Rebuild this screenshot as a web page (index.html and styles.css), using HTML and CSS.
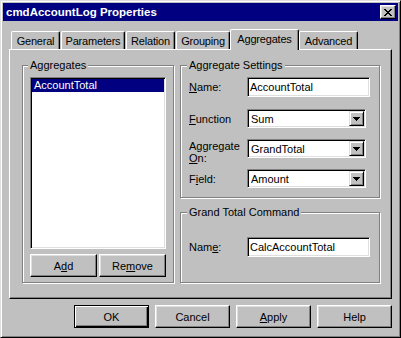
FILE: index.html
```html
<!DOCTYPE html>
<html lang="en">
<head>
    <meta charset="UTF-8">
    <title>cmdAccountLog Properties</title>
    <link rel="stylesheet" href="styles.css">
</head>
<body>
    <div class="window">
        <div class="titlebar">
            <span class="title">cmdAccountLog Properties</span>
            <span class="close">
                <svg width="8" height="7" viewBox="0 0 8 7" shape-rendering="crispEdges">
                    <path d="M0 0h2v1H0zM6 0h2v1H6zM1 1h2v1H1zM5 1h2v1H5zM2 2h4v1H2zM3 3h2v1H3zM2 4h4v1H2zM1 5h2v1H1zM5 5h2v1H5zM0 6h2v1H0zM6 6h2v1H6z" fill="#000"/>
                </svg>
            </span>
        </div>

        <div class="content">
            <div class="tabs">
                <div class="tab tab-general">General</div>
                <div class="tab tab-parameters">Parameters</div>
                <div class="tab tab-relation">Relation</div>
                <div class="tab tab-grouping">Grouping</div>
                <div class="tab tab-aggregates active">Aggregates</div>
                <div class="tab tab-advanced">Advanced</div>
            </div>

            <div class="panel">
                <div class="group group-list">
                    <span class="legend">Aggregates</span>
                    <div class="listbox">
                        <div class="item selected">AccountTotal</div>
                    </div>
                    <div class="list-buttons">
                        <button class="btn">A<u>d</u>d</button>
                        <button class="btn">Re<u>m</u>ove</button>
                    </div>
                </div>

                <div class="right-col">
                    <div class="group group-settings">
                        <span class="legend">Aggregate Settings</span>
                        <div class="row row-first">
                            <label><u>N</u>ame:</label>
                            <div class="textbox">AccountTotal</div>
                        </div>
                        <div class="row">
                            <label><u>F</u>unction</label>
                            <div class="combo"><span>Sum</span><span class="arrow"><svg width="7" height="4" viewBox="0 0 7 4" shape-rendering="crispEdges"><path d="M0 0h7v1H0zM1 1h5v1H1zM2 2h3v1H2zM3 3h1v1H3z" fill="#000"/></svg></span></div>
                        </div>
                        <div class="row row-tall">
                            <label>Aggregate<br><u>O</u>n:</label>
                            <div class="combo"><span>GrandTotal</span><span class="arrow"><svg width="7" height="4" viewBox="0 0 7 4" shape-rendering="crispEdges"><path d="M0 0h7v1H0zM1 1h5v1H1zM2 2h3v1H2zM3 3h1v1H3z" fill="#000"/></svg></span></div>
                        </div>
                        <div class="row">
                            <label>F<u>i</u>eld:</label>
                            <div class="combo"><span>Amount</span><span class="arrow"><svg width="7" height="4" viewBox="0 0 7 4" shape-rendering="crispEdges"><path d="M0 0h7v1H0zM1 1h5v1H1zM2 2h3v1H2zM3 3h1v1H3z" fill="#000"/></svg></span></div>
                        </div>
                    </div>

                    <div class="group group-command">
                        <span class="legend">Grand Total Command</span>
                        <div class="row row-first">
                            <label>Nam<u>e</u>:</label>
                            <div class="textbox">CalcAccountTotal</div>
                        </div>
                    </div>
                </div>
            </div>

            <div class="dialog-buttons">
                <button class="btn btn-wide default">OK</button>
                <button class="btn btn-wide">Cancel</button>
                <button class="btn btn-wide"><u>A</u>pply</button>
                <button class="btn btn-wide">Help</button>
            </div>
        </div>
    </div>
</body>
</html>
```

FILE: styles.css
```css
* { box-sizing: border-box; }
body { margin: 0; font-family: "Liberation Sans", Arial, sans-serif; font-size: 11px; color: #000; background: #c0c0c0; }
u { text-decoration: underline; text-underline-offset: 1px; }

.window { width: 401px; height: 338px; background: #c0c0c0; border: 1px solid; border-color: #dfdfdf #000 #000 #dfdfdf; box-shadow: inset 1px 1px #fff, inset -1px -1px #808080; padding: 2px; }
.titlebar { height: 18px; background: #000080; color: #fff; display: flex; align-items: center; justify-content: space-between; padding: 0 2px 0 3px; }
.title { font-weight: bold; font-size: 11.5px; }
.close { width: 16px; height: 14px; background: #c0c0c0; border: 1px solid; border-color: #fff #000 #000 #fff; box-shadow: inset -1px -1px #808080, inset 1px 1px #dfdfdf; display: flex; align-items: center; justify-content: center; }
.close svg { display: block; }

.content { padding: 8px 6px 0 6px; }

.tabs { display: flex; align-items: flex-end; height: 20px; padding-left: 2px; position: relative; z-index: 1; }
.tab { height: 18px; padding: 0; margin-left: 1px; border: 1px solid; border-bottom: none; border-color: #fff #000 #000 #fff; border-radius: 2px 2px 0 0; box-shadow: inset -1px 0 #808080; background: #c0c0c0; display: flex; align-items: center; justify-content: center; white-space: nowrap; letter-spacing: -0.2px; }
.tab:first-child { margin-left: 0; }
.tab.active { height: 21px; margin-bottom: -1px; margin-left: 0; padding-bottom: 2px; }
.tab.active + .tab { margin-left: 0; }
.tab-general { width: 49px; }
.tab-parameters { width: 64px; }
.tab-relation { width: 49px; }
.tab-grouping { width: 54px; }
.tab-aggregates { width: 69px; }
.tab-advanced { width: 59px; }

.panel { height: 250px; border: 1px solid; border-color: #fff #000 #000 #fff; box-shadow: inset -1px -1px #808080; display: flex; gap: 6px; padding: 15px 11px 0 12px; }

.group { position: relative; border: 1px solid #808080; box-shadow: inset 1px 1px #fff, 1px 1px 0 #fff; }
.legend { position: absolute; top: -7px; left: 6px; padding: 0 2px; background: #c0c0c0; line-height: 13px; white-space: nowrap; }

.group-list { width: 152px; height: 218px; padding: 11px 7px 0 7px; }
.group-list .legend { left: 5px; }
.listbox { width: 136px; height: 172px; background: #fff; border: 1px solid; border-color: #808080 #fff #fff #808080; box-shadow: inset 1px 1px #000, inset -1px -1px #dfdfdf; padding: 1px; }
.item { height: 13px; line-height: 13px; padding-left: 2px; }
.item.selected { background: #000080; color: #fff; }
.list-buttons { display: flex; gap: 2px; margin-top: 5px; }

.btn { height: 23px; width: 67px; padding: 0; font: inherit; color: #000; background: #c0c0c0; border: 1px solid; border-color: #fff #000 #000 #fff; box-shadow: inset -1px -1px #808080, inset 1px 1px #dfdfdf; }
.btn-wide { width: 75px; }
.btn.default { border-color: #000; box-shadow: inset 1px 1px #fff, inset -1px -1px #000, inset -2px -2px #808080; }

.right-col { width: 200px; display: flex; flex-direction: column; gap: 14px; }
.group-settings { height: 133px; padding: 11px 0 0 8px; }
.group-command { height: 71px; padding: 24px 0 0 8px; }

.row { display: flex; align-items: center; height: 19px; margin-bottom: 11px; }
.row-first { height: 20px; margin-bottom: 12px; }
.row label { width: 58px; flex: none; }
.row-tall { align-items: flex-start; }
.row-tall label { line-height: 12px; margin-top: 1px; }
.row-tall .combo { align-self: stretch; }

.textbox { width: 123px; height: 20px; background: #fff; border: 1px solid; border-color: #808080 #fff #fff #808080; box-shadow: inset 1px 1px #000, inset -1px -1px #dfdfdf; padding: 0 2px; display: flex; align-items: center; }
.combo { width: 119px; height: 19px; background: #fff; border: 1px solid; border-color: #808080 #fff #fff #808080; box-shadow: inset 1px 1px #000, inset -1px -1px #dfdfdf; padding: 1px 1px 1px 3px; display: flex; align-items: center; justify-content: space-between; }
.arrow { width: 15px; height: 15px; background: #c0c0c0; border: 1px solid; border-color: #dfdfdf #000 #000 #dfdfdf; box-shadow: inset 1px 1px #fff, inset -1px -1px #808080; display: flex; align-items: center; justify-content: center; }
.arrow svg { display: block; }

.dialog-buttons { display: flex; justify-content: flex-end; gap: 6px; margin-top: 6px; }
```
